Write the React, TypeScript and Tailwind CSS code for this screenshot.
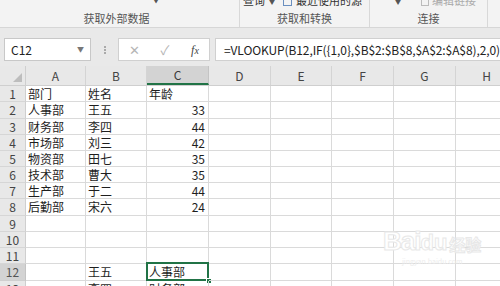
import React from "react";

const F = '"Noto Sans CJK SC", "Noto Sans", sans-serif';

const cols = [
  { k: "A", w: 60 },
  { k: "B", w: 61 },
  { k: "C", w: 62 },
  { k: "D", w: 62 },
  { k: "E", w: 61 },
  { k: "F", w: 62 },
  { k: "G", w: 62 },
  { k: "H", w: 62 },
];

const rowH = [16, 17, 16, 16, 16, 16, 16, 17, 16, 16, 16, 17, 16];

const data: Record<number, [string, string, string]> = {
  1: ["部门", "姓名", "年龄"],
  2: ["人事部", "王五", "33"],
  3: ["财务部", "李四", "44"],
  4: ["市场部", "刘三", "42"],
  5: ["物资部", "田七", "35"],
  6: ["技术部", "曹大", "35"],
  7: ["生产部", "于二", "44"],
  8: ["后勤部", "宋六", "24"],
  12: ["", "王五", "人事部"],
  13: ["", "李四", "财务部"],
};

export default function App() {
  return (
    <div
      className="w-[500px] h-[286px] overflow-hidden bg-white relative"
      style={{ fontFamily: F }}
    >
      {/* Ribbon */}
      <div className="h-[28px] bg-[#f3f3f3] border-b border-[#d6d6d6] flex overflow-hidden">
        <div className="w-[240px] shrink-0 border-r border-[#d8d8d8] flex flex-col items-center">
          <div className="h-[6px] w-full relative overflow-hidden">
            <span className="absolute left-[152px] top-[-6px] text-[8px] text-[#555]">▼</span>
          </div>
          <div className="text-[11px] leading-[16px] text-[#555] mt-[4px] mr-[6px]">获取外部数据</div>
        </div>
        <div className="w-[130px] shrink-0 border-r border-[#d8d8d8] flex flex-col items-center">
          <div className="h-[6px] w-full flex items-end gap-[4px] pl-[3px] overflow-hidden">
            <span className="text-[11px] leading-[11px] text-[#333]">查询</span>
            <span className="text-[6px] leading-[8px] text-[#555]">▼</span>
            <span className="ml-[4px] w-[9px] h-[6px] border border-[#6a8fbf] border-t-0"></span>
            <span className="text-[11px] leading-[11px] text-[#333]">最近使用的源</span>
          </div>
          <div className="text-[11px] leading-[16px] text-[#555] mt-[4px]">获取和转换</div>
        </div>
        <div className="w-[118px] shrink-0 border-r border-[#d8d8d8] flex flex-col items-center">
          <div className="h-[6px] w-full flex items-end overflow-hidden">
            <span className="ml-[25px] text-[6px] leading-[8px] text-[#555]">▼</span>
            <span className="ml-[20px] w-[8px] h-[6px] border border-[#bbb] border-t-0"></span>
            <span className="ml-[3px] text-[11px] leading-[11px] text-[#aaa]">编辑链接</span>
          </div>
          <div className="text-[11px] leading-[16px] text-[#555] mt-[4px]">连接</div>
        </div>
        <div className="flex-1"></div>
      </div>

      {/* Formula bar */}
      <div className="h-[38px] bg-[#e9e9e9] flex items-start pt-[10px] pl-[4px]">
        <div className="w-[87px] shrink-0 h-[23px] bg-white border border-[#c8c8c8] flex items-center pl-[6px] pr-[6px] justify-between">
          <span className="text-[12px] text-[#222]">C12</span>
          <span className="text-[7px] text-[#777]">▼</span>
        </div>
        <div className="w-[27px] shrink-0 h-[23px] flex items-center justify-center">
          <span className="flex flex-col gap-[1px]">
            <span className="w-[2px] h-[2px] bg-[#aaa]"></span>
            <span className="w-[2px] h-[2px] bg-[#aaa]"></span>
            <span className="w-[2px] h-[2px] bg-[#aaa]"></span>
          </span>
        </div>
        <div className="w-[92px] shrink-0 h-[23px] bg-white border border-[#d0d0d0] flex items-center">
          <span className="w-[30px] text-center text-[13px] text-[#b5b5b5]">✕</span>
          <span className="w-[32px] text-center text-[13px] text-[#b5b5b5]">✓</span>
          <span
            className="w-[28px] text-center text-[12px] italic text-[#444]"
            style={{ fontFamily: '"Liberation Serif", serif' }}
          >
            f<span className="text-[10px]">x</span>
          </span>
        </div>
        <div className="ml-[5px] flex-1 h-[23px] bg-white border border-[#d0d0d0] border-r-0 flex items-center pl-[8px] overflow-hidden">
          <span className="text-[12px] text-[#222] whitespace-nowrap tracking-[-0.1px]">
            =VLOOKUP(B12,IF({"{"}1,0{"}"},$B$2:$B$8,$A$2:$A$8),2,0)
          </span>
        </div>
      </div>

      {/* Grid */}
      <div className="flex flex-col">
        {/* header row */}
        <div className="flex h-[20px] bg-[#e8e8e8] border-b border-[#cfcfcf]">
          <div className="w-[26px] shrink-0 border-r border-[#cfcfcf] relative">
            <span className="absolute right-[3px] bottom-[3px] w-0 h-0 border-l-[9px] border-l-transparent border-b-[9px] border-b-[#bdbdbd]"></span>
          </div>
          {cols.map((c) => (
            <div
              key={c.k}
              style={{ width: c.w }}
              className={
                c.k === "C"
                  ? "shrink-0 bg-[#d3d3d3] border-r border-[#c4c4c4] border-b-2 border-b-[#217346] flex items-center justify-center text-[12px] text-[#3a3a3a]"
                  : "shrink-0 border-r border-[#d4d4d4] flex items-center justify-center text-[12px] text-[#444]"
              }
            >
              {c.k}
            </div>
          ))}
        </div>
        {rowH.map((h, i) => {
          const r = i + 1;
          const d = data[r] || ["", "", ""];
          const sel = r === 12;
          return (
            <div key={r} className="flex shrink-0" style={{ height: h }}>
              <div
                className={
                  sel
                    ? "w-[26px] shrink-0 bg-[#d3d3d3] border-r border-[#c4c4c4] border-b border-b-[#cfcfcf] flex items-center justify-center text-[12px] text-[#555]"
                    : "w-[26px] shrink-0 bg-[#e8e8e8] border-r border-[#cfcfcf] border-b border-b-[#d6d6d6] flex items-center justify-center text-[12px] text-[#444]"
                }
              >
                {r}
              </div>
              {cols.map((c, ci) => {
                const txt = ci < 3 ? d[ci] : "";
                const num = /^\d+$/.test(txt);
                const isSel = sel && c.k === "C";
                return (
                  <div
                    key={c.k}
                    style={{ width: c.w }}
                    className={
                      "shrink-0 border-r border-b border-[#dadada] flex items-center text-[12px] text-[#1e1e1e] whitespace-nowrap relative " +
                      (num ? "justify-end pr-[3px]" : "pl-[2px]")
                    }
                  >
                    {txt}
                    {isSel && (
                      <>
                        <span className="absolute left-[-1px] top-[-2px] right-[-1px] bottom-[-1px] border-2 border-[#217346]"></span>
                        <span className="absolute right-[-4px] bottom-[-4px] w-[6px] h-[6px] bg-[#217346] border border-white"></span>
                      </>
                    )}
                  </div>
                );
              })}
            </div>
          );
        })}
      </div>

      {/* watermark */}
      <div className="absolute left-[383px] top-[228px] flex flex-col items-center pointer-events-none">
        <div className="flex items-end leading-none">
          <span
            className="text-[26px] font-bold text-white tracking-[-1px]"
            style={{ fontFamily: '"Liberation Sans", sans-serif', WebkitTextStroke: "1px #e8e8e8" }}
          >
            Bai
          </span>
          <span
            className="text-[22px] font-bold text-white"
            style={{ fontFamily: '"Liberation Sans", sans-serif', WebkitTextStroke: "1px #e8e8e8" }}
          >
            du
          </span>
          <span
            className="text-[16px] font-bold text-white ml-[2px] mb-[2px]"
            style={{ WebkitTextStroke: "1px #e8e8e8" }}
          >
            经验
          </span>
        </div>
        <div className="text-[7px] text-[#ececec] mt-[2px] whitespace-nowrap">jingyan.baidu.com</div>
      </div>
    </div>
  );
}
